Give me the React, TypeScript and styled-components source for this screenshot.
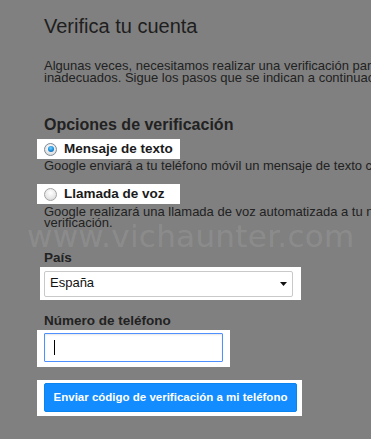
import React from "react";
import styled, { createGlobalStyle } from "styled-components";

const GlobalStyle = createGlobalStyle`
    html, body {
        margin: 0;
        padding: 0;
        background: #808080;
        overflow: hidden;
    }
    body {
        font-family: "Liberation Sans", Arial, sans-serif;
        color: #222;
    }
`;

const Page = styled.div`
    position: relative;
    width: 620px;
    padding: 14px 0 40px 44px;
    display: flex;
    flex-direction: column;
    align-items: flex-start;
`;

const Title = styled.h1`
    margin: 0;
    font-size: 20px;
    font-weight: normal;
    line-height: 24px;
    color: #1e1e1e;
`;

const Intro = styled.p`
    margin: 22px 0 0;
    font-size: 13px;
    line-height: 12px;
    white-space: nowrap;
`;

const Heading = styled.h2`
    margin: 32px 0 0;
    font-size: 16px;
    font-weight: bold;
    line-height: 18px;
`;

const OptionBox = styled.label<{ $top: number }>`
    display: flex;
    align-items: center;
    gap: 7px;
    box-sizing: border-box;
    width: 143px;
    height: 20px;
    margin: ${(p) => p.$top}px 0 0 -7px;
    padding-left: 7px;
    background: #fff;
    font-size: 13.5px;
    font-weight: bold;
    line-height: 20px;
    color: #1b1b1b;
`;

const Radio = styled.span<{ $checked?: boolean }>`
    position: relative;
    box-sizing: border-box;
    width: 13px;
    height: 13px;
    border-radius: 50%;
    border: 1px solid ${(p) => (p.$checked ? "#7b8a99" : "#a3a3a3")};
    background: radial-gradient(circle at 50% 35%, #ffffff 0%, #e9e9e9 55%, #cfcfcf 100%);
    flex-shrink: 0;

    &::after {
        content: "";
        display: ${(p) => (p.$checked ? "block" : "none")};
        position: absolute;
        left: 2.5px;
        top: 2.5px;
        width: 6px;
        height: 6px;
        border-radius: 50%;
        background: radial-gradient(circle at 45% 35%, #6fd0ff 0%, #1a8ad8 55%, #0b4f8a 100%);
    }
`;

const Desc = styled.div<{ $top: number }>`
    margin-top: ${(p) => p.$top}px;
    font-size: 13px;
    line-height: 11px;
    white-space: nowrap;
`;

const FieldLabel = styled.div<{ $top: number }>`
    margin-top: ${(p) => p.$top}px;
    font-size: 13.5px;
    font-weight: bold;
    line-height: 16px;
`;

const Spot = styled.div<{ $pad: string; $shift: number; $top: number }>`
    display: flex;
    margin: ${(p) => p.$top}px 0 0 -${(p) => p.$shift}px;
    padding: ${(p) => p.$pad};
    background: #fff;
`;

const Select = styled.div`
    box-sizing: border-box;
    width: 249px;
    height: 26px;
    display: flex;
    align-items: flex-start;
    justify-content: space-between;
    padding: 0 5px 0 5px;
    border: 1px solid #c9c9c9;
    border-radius: 2px;
    font-size: 13px;
    line-height: 21px;
    color: #111;
`;

const Arrow = styled.svg`
    margin-top: 10px;
`;

const PhoneInput = styled.div`
    box-sizing: border-box;
    width: 179px;
    height: 29px;
    display: flex;
    align-items: center;
    padding-left: 9px;
    border: 1px solid #4d90fe;
    border-radius: 1px;
    box-shadow: inset 0 1px 2px rgba(0, 0, 0, 0.1);
`;

const Caret = styled.span`
    width: 1px;
    height: 15px;
    background: #000;
`;

const Button = styled.button`
    box-sizing: border-box;
    width: 253px;
    height: 29px;
    padding: 0;
    border: 1px solid #0b84f0;
    border-radius: 2px;
    background: #128cff;
    color: #fff;
    font-family: "Liberation Sans", Arial, sans-serif;
    font-size: 11.5px;
    font-weight: bold;
    line-height: 27px;
    cursor: pointer;
`;

const Watermark = styled.div`
    position: absolute;
    left: 27px;
    top: 221px;
    font-family: "DejaVu Sans", Verdana, sans-serif;
    font-size: 31px;
    line-height: 31px;
    letter-spacing: 0.3px;
    color: rgba(255, 255, 255, 0.11);
    white-space: nowrap;
    pointer-events: none;
`;

export default function App() {
    return (
        <>
            <GlobalStyle />
            <Page>
                <Title>Verifica tu cuenta</Title>
                <Intro>
                    Algunas veces, necesitamos realizar una verificación para evitar que se creen cuentas con fines
                    <br />
                    inadecuados. Sigue los pasos que se indican a continuación.
                </Intro>

                <Heading>Opciones de verificación</Heading>
                <OptionBox $top={5}>
                    <Radio $checked />
                    Mensaje de texto
                </OptionBox>
                <Desc $top={1}>
                    Google enviará a tu teléfono móvil un mensaje de texto con un código de verificación.
                </Desc>
                <OptionBox $top={13}>
                    <Radio />
                    Llamada de voz
                </OptionBox>
                <Desc $top={2}>
                    Google realizará una llamada de voz automatizada a tu número de teléfono con un código de
                    <br />
                    verificación.
                </Desc>

                <FieldLabel $top={22}>País</FieldLabel>
                <Spot $top={1} $shift={4} $pad="4px 8px 3px 4px">
                    <Select>
                        España
                        <Arrow width="7" height="4" viewBox="0 0 7 4">
                            <path d="M0 0 H7 L3.5 4 Z" fill="#111" />
                        </Arrow>
                    </Select>
                </Spot>

                <FieldLabel $top={13}>Número de teléfono</FieldLabel>
                <Spot $top={1} $shift={7} $pad="3px 7px 5px 7px">
                    <PhoneInput>
                        <Caret />
                    </PhoneInput>
                </Spot>

                <Spot $top={13} $shift={7} $pad="3px 5px 4px 7px">
                    <Button>Enviar código de verificación a mi teléfono</Button>
                </Spot>

                <Watermark>www.vichaunter.com</Watermark>
            </Page>
        </>
    );
}
